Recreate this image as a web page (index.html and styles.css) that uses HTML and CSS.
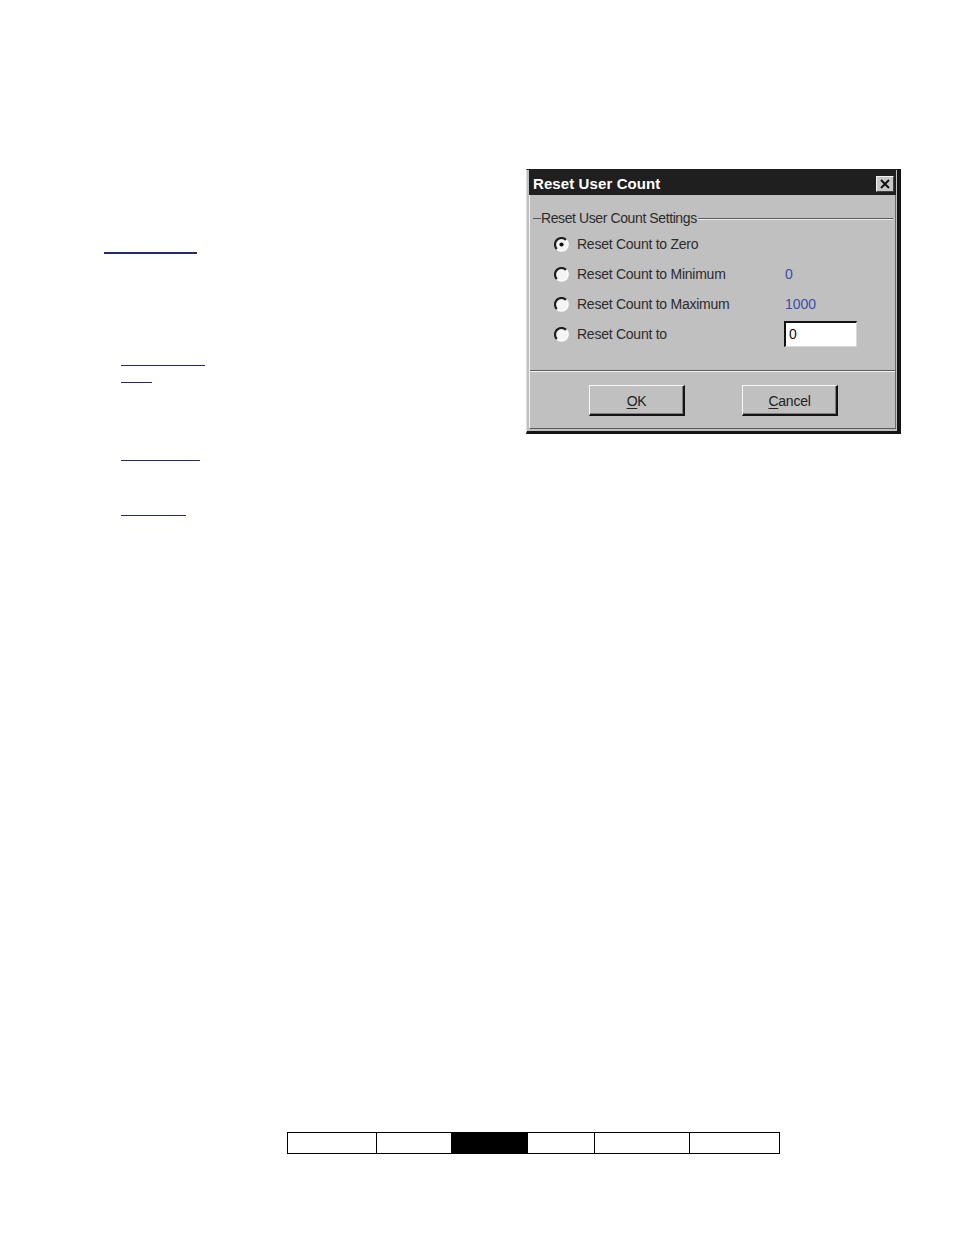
FILE: index.html
```html
<!DOCTYPE html>
<html>
<head>
<meta charset="utf-8">
<link rel="stylesheet" href="styles.css">
</head>
<body>
<div class="page">
  <div class="top">
    <div class="links">
      <a class="ln l1" href="#"></a>
      <a class="ln l2" href="#"></a>
      <a class="ln l3" href="#"></a>
      <a class="ln l4" href="#"></a>
      <a class="ln l5" href="#"></a>
    </div>
    <div class="dialog">
      <div class="titlebar">
        <span class="title">Reset User Count</span>
        <span class="close">
          <svg width="12" height="10" viewBox="0 0 12 10"><path d="M2 1 L10 9 M10 1 L2 9" stroke="#111" stroke-width="2" fill="none"/></svg>
        </span>
      </div>
      <div class="body">
        <div class="legend">
          <span class="lg-dash"></span>
          <span class="lg-text">Reset User Count Settings</span>
          <span class="lg-line"></span>
        </div>
        <div class="row">
          <span class="radio">
            <svg width="15" height="15" viewBox="0 0 15 15"><circle cx="7.5" cy="7.5" r="6" fill="#f4f4f4"/><path d="M2.9 12.1 A6.5 6.5 0 0 1 12.1 2.9" stroke="#1e1e1e" stroke-width="2.2" fill="none"/><path d="M12.1 2.9 A6.5 6.5 0 0 1 2.9 12.1" stroke="#ffffff" stroke-width="1.6" fill="none"/><circle cx="7.5" cy="7.5" r="2.1" fill="#111"/></svg>
          </span>
          <span class="label">Reset Count to Zero</span>
        </div>
        <div class="row">
          <span class="radio">
            <svg width="15" height="15" viewBox="0 0 15 15"><circle cx="7.5" cy="7.5" r="6" fill="#f4f4f4"/><path d="M2.9 12.1 A6.5 6.5 0 0 1 12.1 2.9" stroke="#1e1e1e" stroke-width="2.2" fill="none"/><path d="M12.1 2.9 A6.5 6.5 0 0 1 2.9 12.1" stroke="#ffffff" stroke-width="1.6" fill="none"/></svg>
          </span>
          <span class="label">Reset Count to Minimum</span>
          <span class="value">0</span>
        </div>
        <div class="row">
          <span class="radio">
            <svg width="15" height="15" viewBox="0 0 15 15"><circle cx="7.5" cy="7.5" r="6" fill="#f4f4f4"/><path d="M2.9 12.1 A6.5 6.5 0 0 1 12.1 2.9" stroke="#1e1e1e" stroke-width="2.2" fill="none"/><path d="M12.1 2.9 A6.5 6.5 0 0 1 2.9 12.1" stroke="#ffffff" stroke-width="1.6" fill="none"/></svg>
          </span>
          <span class="label">Reset Count to Maximum</span>
          <span class="value">1000</span>
        </div>
        <div class="row">
          <span class="radio">
            <svg width="15" height="15" viewBox="0 0 15 15"><circle cx="7.5" cy="7.5" r="6" fill="#f4f4f4"/><path d="M2.9 12.1 A6.5 6.5 0 0 1 12.1 2.9" stroke="#1e1e1e" stroke-width="2.2" fill="none"/><path d="M12.1 2.9 A6.5 6.5 0 0 1 2.9 12.1" stroke="#ffffff" stroke-width="1.6" fill="none"/></svg>
          </span>
          <span class="label">Reset Count to</span>
          <span class="input">0</span>
        </div>
        <div class="sep"></div>
        <div class="buttons">
          <span class="btn"><u>O</u>K</span>
          <span class="btn"><u>C</u>ancel</span>
        </div>
      </div>
    </div>
  </div>
  <div class="bar">
    <span class="cell c1"></span>
    <span class="cell c2"></span>
    <span class="cell c3"></span>
    <span class="cell c4"></span>
    <span class="cell c5"></span>
    <span class="cell c6"></span>
  </div>
</div>
</body>
</html>
```
FILE: styles.css
```css
html, body {
  margin: 0;
  padding: 0;
  background: #ffffff;
}
.page {
  width: 954px;
  height: 1235px;
  padding-top: 169px;
  box-sizing: border-box;
  font-family: "Liberation Sans", Arial, sans-serif;
}
.top {
  display: flex;
  align-items: flex-start;
}
.links {
  width: 422px;
  padding-left: 104px;
  height: 347px;
}
.ln {
  display: block;
  height: 0;
  border-bottom: 1px solid #272874;
}
.l1 { margin-top: 83px; width: 93px; border-bottom-width: 2px; }
.l2 { margin-top: 111px; margin-left: 17px; width: 84px; }
.l3 { margin-top: 16px; margin-left: 17px; width: 31px; }
.l4 { margin-top: 77px; margin-left: 17px; width: 79px; }
.l5 { margin-top: 54px; margin-left: 17px; width: 65px; }

.dialog {
  width: 375px;
  height: 265px;
  box-sizing: border-box;
  background: #c0c0c0;
  border-style: solid;
  border-width: 1px 4px 3px 1px;
  border-color: #1c1c1c #151515 #151515 #dcdcdc;
  padding: 0 1px 2px 2px;
  display: flex;
  flex-direction: column;
}
.titlebar {
  height: 25px;
  background: #1f1f1f;
  display: flex;
  align-items: center;
  justify-content: space-between;
  padding-left: 4px;
}
.title {
  color: #ffffff;
  font-weight: bold;
  font-size: 15px;
  letter-spacing: 0.1px;
  margin-top: 1px;
}
.close {
  width: 18px;
  height: 16px;
  box-sizing: border-box;
  margin-right: 2px;
  margin-top: 2px;
  background: #c8c8c8;
  border-style: solid;
  border-width: 1px;
  border-color: #f4f4f4 #404040 #404040 #f4f4f4;
  display: flex;
  align-items: center;
  justify-content: center;
}
.close svg { display: block; }
.body {
  flex: 1;
  border-left: 1px solid #f2f2f2;
  border-right: 1px solid #6a6a6a;
  border-bottom: 1px solid #5a5a5a;
  padding-top: 16px;
  display: flex;
  flex-direction: column;
  color: #2c2c2c;
  font-size: 14px;
  letter-spacing: -0.25px;
}
.legend {
  height: 15px;
  display: flex;
  align-items: center;
  margin: 0 2px 3px 3px;
}
.lg-dash {
  width: 8px;
  border-top: 1px solid #5a5a5a;
}
.lg-text {
  letter-spacing: -0.4px;
  line-height: 15px;
  padding-right: 1px;
}
.lg-line {
  flex: 1;
  border-top: 1px solid #5a5a5a;
  border-bottom: 1px solid #eeeeee;
}
.row {
  height: 30px;
  display: flex;
  align-items: center;
  padding-left: 24px;
}
.radio {
  width: 15px;
  height: 15px;
  margin-right: 8px;
}
.radio svg { display: block; }
.label {
  width: 208px;
}
.value {
  color: #3b4cae;
  letter-spacing: 0;
}
.input {
  width: 73px;
  height: 26px;
  box-sizing: border-box;
  margin-left: -1px;
  background: #ffffff;
  border-style: solid;
  border-width: 2px 1px 1px 2px;
  border-color: #111 #d8d8d8 #d8d8d8 #111;
  padding-left: 3px;
  line-height: 22px;
  color: #111;
}
.sep {
  margin-top: 21px;
  border-top: 1px solid #5a5a5a;
  border-bottom: 1px solid #f4f4f4;
}
.buttons {
  margin-top: 13px;
  padding-left: 59px;
  display: flex;
  gap: 57px;
  padding-bottom: 12px;
}
.btn {
  width: 96px;
  height: 31px;
  box-sizing: border-box;
  border-style: solid;
  border-width: 1px 2px 2px 1px;
  border-color: #f8f8f8 #141414 #141414 #f8f8f8;
  box-shadow: inset -1px -1px 0 #808080;
  display: flex;
  align-items: center;
  justify-content: center;
  color: #222;
  font-size: 14px;
  padding-top: 1px;
}
.btn u { text-underline-offset: 2px; }

.bar {
  margin-top: 616px;
  margin-left: 287px;
  display: flex;
  width: 493px;
  height: 22px;
  box-sizing: border-box;
  border: 1px solid #000;
  border-right: none;
}
.cell {
  height: 20px;
  border-right: 1px solid #000;
}
.c1 { width: 88px; }
.c2 { width: 74px; }
.c3 { width: 75px; background: #000; }
.c4 { width: 66px; }
.c5 { width: 94px; }
.c6 { width: 89px; }
```
